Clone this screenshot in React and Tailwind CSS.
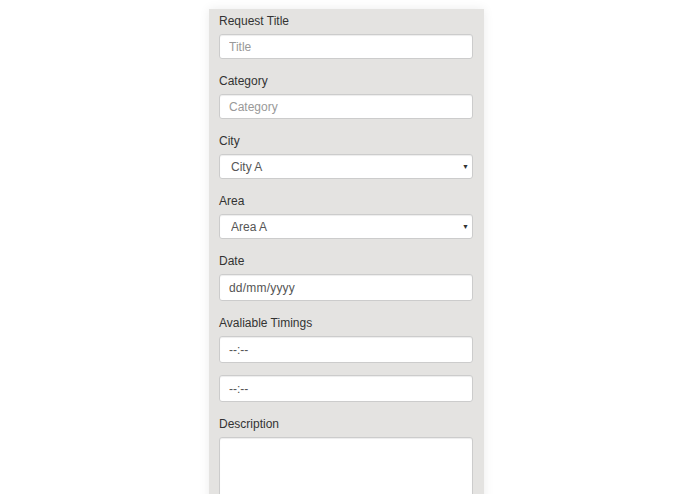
import { useState } from "react";

const base =
  "block w-full px-[9px] text-[12px] text-[#555] bg-white border border-[#ccc] rounded-[3px] shadow-[inset_0_1px_1px_rgba(0,0,0,0.075)] outline-none";
const textCls = base + " h-[25px] placeholder:text-[#999]";
const darkCls = base + " h-[27px] placeholder:text-[#555]";

const Field = ({ label, children }) => (
  <div className="mb-[14px]">
    <label className="block text-[12px] leading-[17px] text-[#333] mb-[4px]">{label}</label>
    {children}
  </div>
);

const Select = ({ value, onChange, options }) => (
  <div className="relative">
    <select
      className={base + " h-[25px] appearance-none pl-[11px]"}
      value={value}
      onChange={(e) => onChange(e.target.value)}
    >
      {options.map((o) => (
        <option key={o}>{o}</option>
      ))}
    </select>
    <span className="pointer-events-none absolute right-[4px] top-[8px] text-[7px] text-[#333]">▼</span>
  </div>
);

const App = () => {
  const [city, setCity] = useState("City A");
  const [area, setArea] = useState("Area A");

  return (
    <div
      className="min-h-[494px] bg-white pt-[9px] pr-[2px]"
      style={{ fontFamily: '"Liberation Sans", Arial, sans-serif' }}
    >
      <form className="w-[275px] mx-auto bg-[#e4e3e1] pl-[10px] pr-[11px] pt-[4px] pb-4 shadow-[0_0_10px_rgba(0,0,0,0.08)]">
        <Field label="Request Title">
          <input className={textCls} type="text" name="title" placeholder="Title" />
        </Field>
        <Field label="Category">
          <input className={textCls} type="text" name="category" placeholder="Category" />
        </Field>
        <Field label="City">
          <Select value={city} onChange={setCity} options={["City A", "City B", "City C"]} />
        </Field>
        <Field label="Area">
          <Select value={area} onChange={setArea} options={["Area A", "Area B", "Area C"]} />
        </Field>
        <Field label="Date">
          <input className={darkCls + " tracking-[0.2px]"} type="text" name="date" placeholder="dd/mm/yyyy" />
        </Field>
        <Field label="Avaliable Timings">
          <input className={darkCls + " mb-[12px]"} type="text" name="from" placeholder="--:--" />
          <input className={darkCls} type="text" name="to" placeholder="--:--" />
        </Field>
        <Field label="Description">
          <textarea className={base + " h-[100px] resize-none"} name="description" />
        </Field>
      </form>
    </div>
  );
};

export default App;
